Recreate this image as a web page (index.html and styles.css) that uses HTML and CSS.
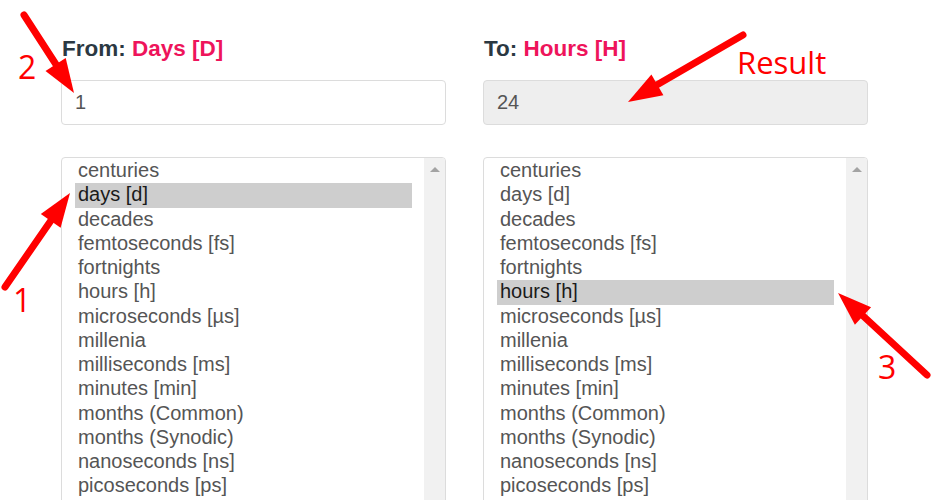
FILE: index.html
```html
<!DOCTYPE html>
<html>
<head>
<meta charset="utf-8">
<link rel="stylesheet" href="styles.css">
</head>
<body>
<div class="page">
  <div class="col">
    <div class="label">From: <span class="unit">Days [D]</span></div>
    <div class="field">1</div>
    <div class="list">
      <div class="options">
        <div class="opt">centuries</div>
        <div class="opt sel">days [d]</div>
        <div class="opt">decades</div>
        <div class="opt">femtoseconds [fs]</div>
        <div class="opt">fortnights</div>
        <div class="opt">hours [h]</div>
        <div class="opt">microseconds [µs]</div>
        <div class="opt">millenia</div>
        <div class="opt">milliseconds [ms]</div>
        <div class="opt">minutes [min]</div>
        <div class="opt">months (Common)</div>
        <div class="opt">months (Synodic)</div>
        <div class="opt">nanoseconds [ns]</div>
        <div class="opt">picoseconds [ps]</div>
      </div>
      <div class="scroll"><div class="up"></div></div>
    </div>
  </div>
  <div class="col">
    <div class="label">To: <span class="unit">Hours [H]</span></div>
    <div class="field readonly">24</div>
    <div class="list">
      <div class="options">
        <div class="opt">centuries</div>
        <div class="opt">days [d]</div>
        <div class="opt">decades</div>
        <div class="opt">femtoseconds [fs]</div>
        <div class="opt">fortnights</div>
        <div class="opt sel">hours [h]</div>
        <div class="opt">microseconds [µs]</div>
        <div class="opt">millenia</div>
        <div class="opt">milliseconds [ms]</div>
        <div class="opt">minutes [min]</div>
        <div class="opt">months (Common)</div>
        <div class="opt">months (Synodic)</div>
        <div class="opt">nanoseconds [ns]</div>
        <div class="opt">picoseconds [ps]</div>
      </div>
      <div class="scroll"><div class="up"></div></div>
    </div>
  </div>
</div>

<svg class="marks" width="935" height="500" viewBox="0 0 935 500">
  <g stroke="#ff0000" stroke-width="7" stroke-linecap="round" fill="none">
    <line x1="24" y1="15" x2="57" y2="66"/>
    <line x1="743" y1="35" x2="655" y2="86"/>
    <line x1="5" y1="287" x2="52" y2="219"/>
    <line x1="927" y1="375" x2="861" y2="314"/>
  </g>
  <g fill="#ff0000">
    <polygon points="74,93 45.5,70.9 65.7,57.9"/>
    <polygon points="628,102 651.4,74.5 663.4,95.3"/>
    <polygon points="70,193 60.6,227.7 40.8,214.1"/>
    <polygon points="838,293 871.1,307.2 854.9,324.8"/>
  </g>
  <g class="note" fill="#ff0000">
    <text x="18" y="79">2</text>
    <text x="13" y="312">1</text>
    <text x="878" y="379">3</text>
    <text x="737" y="74" class="big">Result</text>
  </g>
</svg>
</body>
</html>
```

FILE: styles.css
```css
html, body {
  margin: 0;
  padding: 0;
  background: #ffffff;
}
body {
  position: relative;
  width: 935px;
  height: 500px;
  overflow: hidden;
  font-family: "Liberation Sans", Arial, sans-serif;
}
.page {
  display: flex;
  gap: 37px;
  padding: 35px 0 0 61px;
}
.col {
  width: 385px;
  display: flex;
  flex-direction: column;
}
.label {
  font-size: 22.5px;
  line-height: 27px;
  font-weight: bold;
  color: #2b3842;
  padding-left: 1px;
  margin-bottom: 18px;
}
.unit {
  color: #ee145b;
}
.field {
  box-sizing: border-box;
  height: 45px;
  border: 1px solid #dcdcdc;
  border-radius: 4px;
  padding: 0 13px;
  display: flex;
  align-items: center;
  font-size: 20px;
  color: #555555;
  background: #ffffff;
}
.field.readonly {
  background: #eeeeee;
}
.list {
  margin-top: 32px;
  box-sizing: border-box;
  height: 350px;
  border: 1px solid #dcdcdc;
  border-radius: 4px;
  display: flex;
  overflow: hidden;
}
.options {
  flex: 1;
  padding: 1px 12px 0 13px;
}
.opt {
  height: 24.25px;
  line-height: 22px;
  padding-left: 3px;
  font-size: 20px;
  color: #555555;
  white-space: nowrap;
}
.opt.sel {
  background: #cecece;
  color: #1a1a1a;
}
.scroll {
  width: 21px;
  background: #f1f1f1;
  display: flex;
  justify-content: center;
  padding-top: 9px;
}
.up {
  width: 0;
  height: 0;
  border-left: 5px solid transparent;
  border-right: 5px solid transparent;
  border-bottom: 5px solid #a3a3a3;
}
.marks {
  position: absolute;
  left: 0;
  top: 0;
  pointer-events: none;
}
.note text {
  font-family: "Open Sans", "Noto Sans", sans-serif;
  font-size: 32px;
}
.note text.big {
  font-size: 31px;
}
```
